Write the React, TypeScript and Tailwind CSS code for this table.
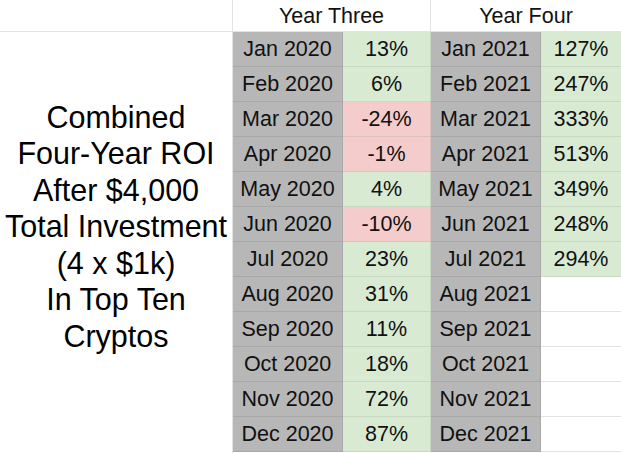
import React from "react";

type Row = {
  month3: string;
  roi3: string;
  neg3?: boolean;
  month4: string;
  roi4?: string;
};

const rows: Row[] = [
  { month3: "Jan 2020", roi3: "13%", month4: "Jan 2021", roi4: "127%" },
  { month3: "Feb 2020", roi3: "6%", month4: "Feb 2021", roi4: "247%" },
  { month3: "Mar 2020", roi3: "-24%", neg3: true, month4: "Mar 2021", roi4: "333%" },
  { month3: "Apr 2020", roi3: "-1%", neg3: true, month4: "Apr 2021", roi4: "513%" },
  { month3: "May 2020", roi3: "4%", month4: "May 2021", roi4: "349%" },
  { month3: "Jun 2020", roi3: "-10%", neg3: true, month4: "Jun 2021", roi4: "248%" },
  { month3: "Jul 2020", roi3: "23%", month4: "Jul 2021", roi4: "294%" },
  { month3: "Aug 2020", roi3: "31%", month4: "Aug 2021" },
  { month3: "Sep 2020", roi3: "11%", month4: "Sep 2021" },
  { month3: "Oct 2020", roi3: "18%", month4: "Oct 2021" },
  { month3: "Nov 2020", roi3: "72%", month4: "Nov 2021" },
  { month3: "Dec 2020", roi3: "87%", month4: "Dec 2021" },
];

const TableRow = ({ row }: { row: Row }) => {
  return (
    <div className="flex h-[35px]">
      <div className="w-[110px] flex items-center justify-center pt-px bg-[#b7b7b7] border-b border-r border-[#a9a9a9]">
        {row.month3}
      </div>
      <div
        className={`w-[88px] flex items-center justify-center pt-px border-b border-r ${
          row.neg3
            ? "bg-[#f4cccc] border-[#dcc0bd]"
            : "bg-[#d9ead3] border-[#c8d8c2]"
        }`}
      >
        {row.roi3}
      </div>
      <div className="w-[110px] flex items-center justify-center pt-px bg-[#b7b7b7] border-b border-r border-[#a9a9a9]">
        {row.month4}
      </div>
      {row.roi4 ? (
        <div className="flex-1 flex items-center justify-center pt-px bg-[#d9ead3] border-b border-[#c8d8c2]">
          {row.roi4}
        </div>
      ) : (
        <div className="flex-1 bg-white border-b border-[#e2e3e3]" />
      )}
    </div>
  );
};

export default function App() {
  return (
    <div className="w-[621px] h-[453px] overflow-hidden bg-white text-[#111] font-['Liberation_Sans',Arial,sans-serif]">
      {/* header */}
      <div className="flex h-[32px] border-b border-[#e2e3e3] text-[21.5px]">
        <div className="w-[233px] border-r border-[#e2e3e3]" />
        <div className="w-[198px] flex items-center justify-center pt-px border-r border-[#e2e3e3]">
          Year Three
        </div>
        <div className="flex-1 flex items-center justify-center pt-px">Year Four</div>
      </div>

      <div className="flex">
        <div className="w-[233px] h-[421px] border-r border-[#e2e3e3] flex items-center justify-center pb-[32px]">
          <p className="text-center text-[30.5px] leading-[36.5px] text-black">
            Combined
            <br />
            Four-Year ROI
            <br />
            After $4,000
            <br />
            Total Investment
            <br />
            (4 x $1k)
            <br />
            In Top Ten
            <br />
            Cryptos
          </p>
        </div>
        <div className="flex-1 text-[21.5px]">
          {rows.map((row) => (
            <TableRow key={row.month3} row={row} />
          ))}
        </div>
      </div>
    </div>
  );
}
